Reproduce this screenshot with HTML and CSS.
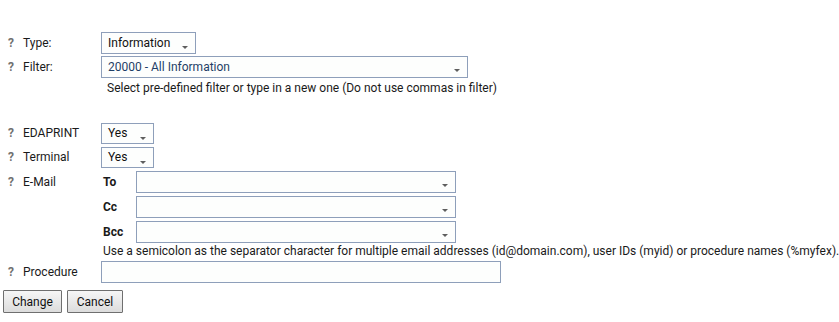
FILE: index.html
```html
<!DOCTYPE html>
<html>
<head>
<meta charset="utf-8">
<link rel="stylesheet" href="styles.css">
</head>
<body>
<form class="form">
  <div class="row row-24">
    <span class="q">?</span><span class="label">Type:</span>
    <div class="select w-type"><span class="val">Information</span><span class="arrow"></span></div>
  </div>
  <div class="row row-24">
    <span class="q">?</span><span class="label">Filter:</span>
    <div class="select w-filter"><span class="val blue">20000 - All Information</span><span class="arrow"></span></div>
  </div>
  <div class="help help-filter">Select pre-defined filter or type in a new one (Do not use commas in filter)</div>

  <div class="row row-yn first-yn">
    <span class="q">?</span><span class="label">EDAPRINT</span>
    <div class="select sm w-yn"><span class="val">Yes</span><span class="arrow"></span></div>
  </div>
  <div class="row row-yn">
    <span class="q">?</span><span class="label">Terminal</span>
    <div class="select sm w-yn"><span class="val">Yes</span><span class="arrow"></span></div>
  </div>
  <div class="row row-mail">
    <span class="q">?</span><span class="label">E-Mail</span>
    <span class="sub">To</span>
    <div class="select w-mail"><span class="val"></span><span class="arrow"></span></div>
  </div>
  <div class="row row-mail">
    <span class="q"></span><span class="label"></span>
    <span class="sub">Cc</span>
    <div class="select w-mail"><span class="val"></span><span class="arrow"></span></div>
  </div>
  <div class="row row-mail">
    <span class="q"></span><span class="label"></span>
    <span class="sub">Bcc</span>
    <div class="select w-mail"><span class="val"></span><span class="arrow"></span></div>
  </div>
  <div class="help help-mail">Use a semicolon as the separator character for multiple email addresses (id@domain.com), user IDs (myid) or procedure names (%myfex).</div>
  <div class="row row-proc">
    <span class="q">?</span><span class="label">Procedure</span>
    <div class="textbox w-proc"></div>
  </div>
  <div class="buttons">
    <button type="button" class="btn btn-change">Change</button>
    <button type="button" class="btn btn-cancel">Cancel</button>
  </div>
</form>
</body>
</html>
```
FILE: styles.css
```css
html, body {
  margin: 0;
  padding: 0;
  background: #ffffff;
}
body {
  font-family: Roboto, "Liberation Sans", Arial, sans-serif;
  font-size: 12px;
  color: #1a1a1a;
}
.form {
  padding-top: 31px;
}
.row {
  display: flex;
  align-items: center;
}
.row-24 { height: 24px; }
.row-yn { height: 24px; }
.first-yn { margin-top: 24px; }
.row-mail { height: 25px; }
.row-proc { height: 25px; margin-top: 1px; }
.q {
  width: 23px;
  padding-left: 8px;
  box-sizing: border-box;
  font-weight: bold;
  color: #707070;
  flex: none;
}
.label {
  width: 78px;
  flex: none;
}
.sub {
  width: 35px;
  padding-left: 2px;
  box-sizing: border-box;
  font-weight: bold;
  flex: none;
}
.select, .textbox {
  position: relative;
  height: 22px;
  box-sizing: border-box;
  border: 1px solid #8e9fba;
  background: #fdfefd;
  display: flex;
  align-items: center;
  flex: none;
}
.select.sm { height: 21px; }
.val {
  padding-left: 6px;
  color: #111;
}
.val.blue { color: #1f3e66; }
.arrow {
  position: absolute;
  right: 7px;
  top: 13px;
  width: 0;
  height: 0;
  border-left: 3.5px solid transparent;
  border-right: 3.5px solid transparent;
  border-top: 3.5px solid #5e5e5e;
}
.w-filter .arrow { top: 12px; }
.w-mail .arrow { top: 12px; }
.w-type { width: 95px; }
.w-filter { width: 367px; }
.w-yn { width: 53px; }
.w-mail { width: 320px; }
.w-proc { width: 400px; }
.help {
  white-space: nowrap;
}
.help-filter {
  padding-left: 107px;
  height: 18px;
  line-height: 18px;
}
.help-mail {
  padding-left: 103px;
  height: 14px;
  line-height: 14px;
}
.buttons {
  display: flex;
  gap: 5px;
  padding-left: 3px;
  margin-top: 6px;
}
.btn {
  font-family: Roboto, "Liberation Sans", Arial, sans-serif;
  font-size: 12px;
  color: #111;
  height: 23px;
  padding: 0;
  border: 1px solid #6f6f6f;
  border-radius: 1px;
  background: linear-gradient(#f6f6f6, #dcdcdc);
}
.btn-change { width: 59px; }
.btn-cancel { width: 56px; }
```
